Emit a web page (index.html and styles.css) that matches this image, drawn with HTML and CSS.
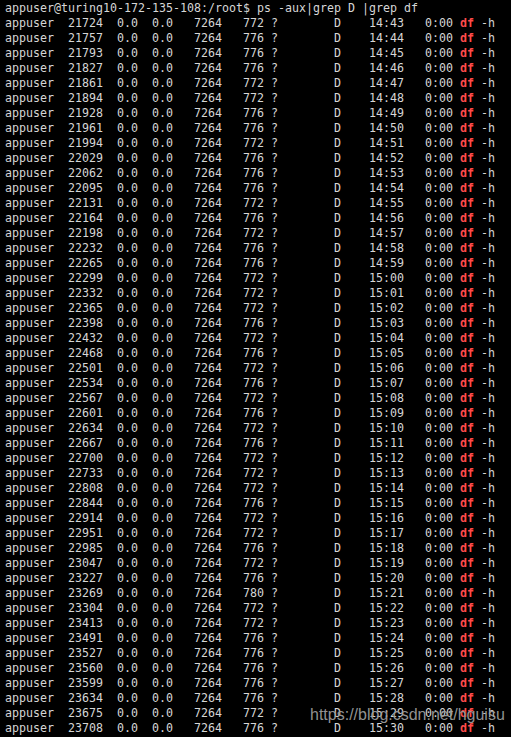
FILE: index.html
```html
<!DOCTYPE html>
<html lang="en">
<head>
    <meta charset="UTF-8">
    <meta name="viewport" content="width=device-width, initial-scale=1.0">
    <title>ps -aux|grep D |grep df</title>
    <link rel="stylesheet" href="styles.css">
</head>
<body>
    <div class="terminal">
        <div class="output">
            <div class="line">appuser@turing10-172-135-108:/root$ ps -aux|grep D |grep df</div>
            <div class="line">appuser  21724  0.0  0.0   7264   772 ?        D    14:43   0:00 <b class="hit">df</b> -h</div>
            <div class="line">appuser  21757  0.0  0.0   7264   776 ?        D    14:44   0:00 <b class="hit">df</b> -h</div>
            <div class="line">appuser  21793  0.0  0.0   7264   776 ?        D    14:45   0:00 <b class="hit">df</b> -h</div>
            <div class="line">appuser  21827  0.0  0.0   7264   776 ?        D    14:46   0:00 <b class="hit">df</b> -h</div>
            <div class="line">appuser  21861  0.0  0.0   7264   772 ?        D    14:47   0:00 <b class="hit">df</b> -h</div>
            <div class="line">appuser  21894  0.0  0.0   7264   772 ?        D    14:48   0:00 <b class="hit">df</b> -h</div>
            <div class="line">appuser  21928  0.0  0.0   7264   776 ?        D    14:49   0:00 <b class="hit">df</b> -h</div>
            <div class="line">appuser  21961  0.0  0.0   7264   776 ?        D    14:50   0:00 <b class="hit">df</b> -h</div>
            <div class="line">appuser  21994  0.0  0.0   7264   772 ?        D    14:51   0:00 <b class="hit">df</b> -h</div>
            <div class="line">appuser  22029  0.0  0.0   7264   776 ?        D    14:52   0:00 <b class="hit">df</b> -h</div>
            <div class="line">appuser  22062  0.0  0.0   7264   776 ?        D    14:53   0:00 <b class="hit">df</b> -h</div>
            <div class="line">appuser  22095  0.0  0.0   7264   776 ?        D    14:54   0:00 <b class="hit">df</b> -h</div>
            <div class="line">appuser  22131  0.0  0.0   7264   772 ?        D    14:55   0:00 <b class="hit">df</b> -h</div>
            <div class="line">appuser  22164  0.0  0.0   7264   776 ?        D    14:56   0:00 <b class="hit">df</b> -h</div>
            <div class="line">appuser  22198  0.0  0.0   7264   772 ?        D    14:57   0:00 <b class="hit">df</b> -h</div>
            <div class="line">appuser  22232  0.0  0.0   7264   776 ?        D    14:58   0:00 <b class="hit">df</b> -h</div>
            <div class="line">appuser  22265  0.0  0.0   7264   776 ?        D    14:59   0:00 <b class="hit">df</b> -h</div>
            <div class="line">appuser  22299  0.0  0.0   7264   772 ?        D    15:00   0:00 <b class="hit">df</b> -h</div>
            <div class="line">appuser  22332  0.0  0.0   7264   772 ?        D    15:01   0:00 <b class="hit">df</b> -h</div>
            <div class="line">appuser  22365  0.0  0.0   7264   772 ?        D    15:02   0:00 <b class="hit">df</b> -h</div>
            <div class="line">appuser  22398  0.0  0.0   7264   776 ?        D    15:03   0:00 <b class="hit">df</b> -h</div>
            <div class="line">appuser  22432  0.0  0.0   7264   772 ?        D    15:04   0:00 <b class="hit">df</b> -h</div>
            <div class="line">appuser  22468  0.0  0.0   7264   776 ?        D    15:05   0:00 <b class="hit">df</b> -h</div>
            <div class="line">appuser  22501  0.0  0.0   7264   772 ?        D    15:06   0:00 <b class="hit">df</b> -h</div>
            <div class="line">appuser  22534  0.0  0.0   7264   776 ?        D    15:07   0:00 <b class="hit">df</b> -h</div>
            <div class="line">appuser  22567  0.0  0.0   7264   772 ?        D    15:08   0:00 <b class="hit">df</b> -h</div>
            <div class="line">appuser  22601  0.0  0.0   7264   776 ?        D    15:09   0:00 <b class="hit">df</b> -h</div>
            <div class="line">appuser  22634  0.0  0.0   7264   772 ?        D    15:10   0:00 <b class="hit">df</b> -h</div>
            <div class="line">appuser  22667  0.0  0.0   7264   776 ?        D    15:11   0:00 <b class="hit">df</b> -h</div>
            <div class="line">appuser  22700  0.0  0.0   7264   772 ?        D    15:12   0:00 <b class="hit">df</b> -h</div>
            <div class="line">appuser  22733  0.0  0.0   7264   772 ?        D    15:13   0:00 <b class="hit">df</b> -h</div>
            <div class="line">appuser  22808  0.0  0.0   7264   772 ?        D    15:14   0:00 <b class="hit">df</b> -h</div>
            <div class="line">appuser  22844  0.0  0.0   7264   776 ?        D    15:15   0:00 <b class="hit">df</b> -h</div>
            <div class="line">appuser  22914  0.0  0.0   7264   772 ?        D    15:16   0:00 <b class="hit">df</b> -h</div>
            <div class="line">appuser  22951  0.0  0.0   7264   772 ?        D    15:17   0:00 <b class="hit">df</b> -h</div>
            <div class="line">appuser  22985  0.0  0.0   7264   776 ?        D    15:18   0:00 <b class="hit">df</b> -h</div>
            <div class="line">appuser  23047  0.0  0.0   7264   772 ?        D    15:19   0:00 <b class="hit">df</b> -h</div>
            <div class="line">appuser  23227  0.0  0.0   7264   776 ?        D    15:20   0:00 <b class="hit">df</b> -h</div>
            <div class="line">appuser  23269  0.0  0.0   7264   780 ?        D    15:21   0:00 <b class="hit">df</b> -h</div>
            <div class="line">appuser  23304  0.0  0.0   7264   772 ?        D    15:22   0:00 <b class="hit">df</b> -h</div>
            <div class="line">appuser  23413  0.0  0.0   7264   772 ?        D    15:23   0:00 <b class="hit">df</b> -h</div>
            <div class="line">appuser  23491  0.0  0.0   7264   776 ?        D    15:24   0:00 <b class="hit">df</b> -h</div>
            <div class="line">appuser  23527  0.0  0.0   7264   776 ?        D    15:25   0:00 <b class="hit">df</b> -h</div>
            <div class="line">appuser  23560  0.0  0.0   7264   776 ?        D    15:26   0:00 <b class="hit">df</b> -h</div>
            <div class="line">appuser  23599  0.0  0.0   7264   776 ?        D    15:27   0:00 <b class="hit">df</b> -h</div>
            <div class="line">appuser  23634  0.0  0.0   7264   776 ?        D    15:28   0:00 <b class="hit">df</b> -h</div>
            <div class="line">appuser  23675  0.0  0.0   7264   772 ?        D    15:29   0:00 <b class="hit">df</b> -h</div>
            <div class="line">appuser  23708  0.0  0.0   7264   776 ?        D    15:30   0:00 <b class="hit">df</b> -h</div>
        </div>
        <div class="watermark">https://blog.csdn.net/hguisu</div>
    </div>
</body>
</html>
```

FILE: styles.css
```css
* {
    margin: 0;
    padding: 0;
    box-sizing: border-box;
}

html, body {
    background: #000;
}

body {
    min-height: 100vh;
}

.terminal {
    position: relative;
    padding: 1px 5px 0;
}

.output {
    font-family: "DejaVu Sans Mono", "Liberation Mono", monospace;
    font-size: 11.63px;
    line-height: 15px;
    color: #d6d6d6;
}

.line {
    white-space: pre;
    height: 15px;
}

.hit {
    color: #ff4b4b;
    font-weight: bold;
}

.watermark {
    position: absolute;
    left: 310px;
    top: 706px;
    font-family: "Liberation Sans", Arial, sans-serif;
    font-size: 16px;
    color: rgba(185, 185, 185, 0.8);
    text-shadow: 0 0 1px rgba(0, 0, 0, 0.6);
}
```
